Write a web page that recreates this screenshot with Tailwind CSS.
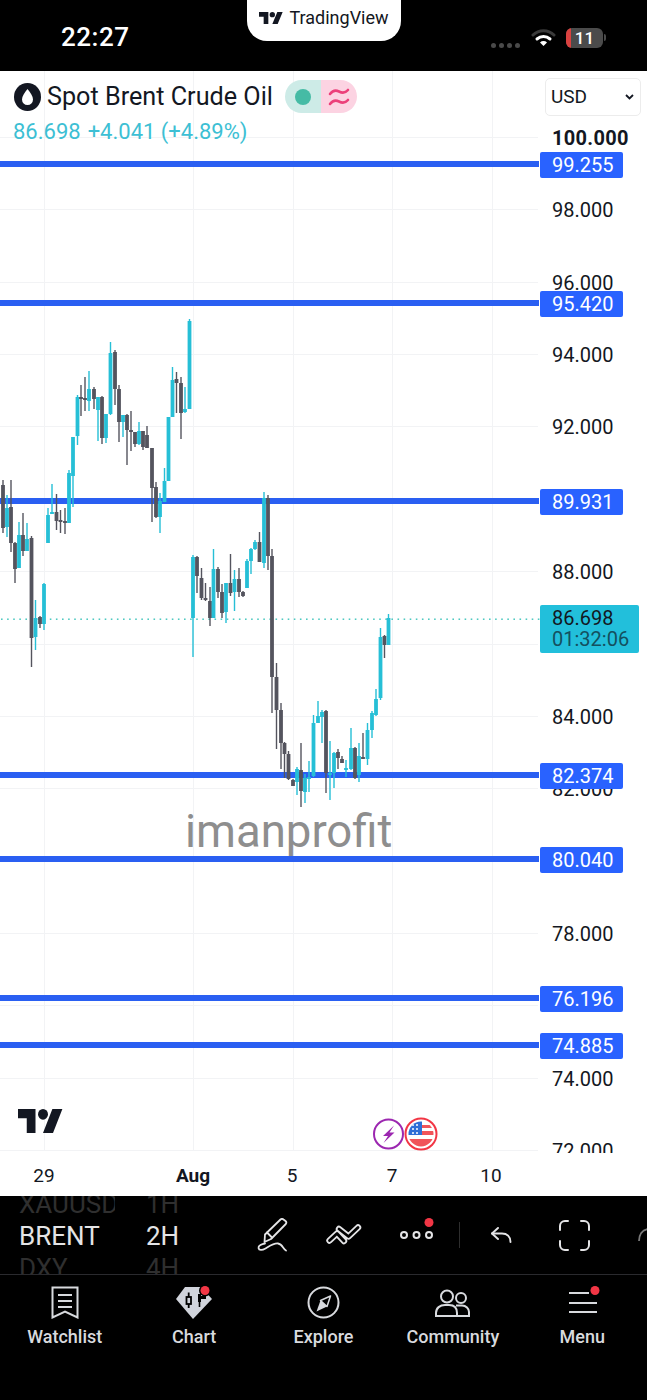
<!DOCTYPE html>
<html lang="en">
<head>
    <meta charset="UTF-8">
    <title>Spot Brent Crude Oil</title>
    <script src="https://cdn.jsdelivr.net/npm/@tailwindcss/browser@4"></script>
</head>
<body class="bg-black">
<div class="w-[647px] h-[1400px] flex flex-col overflow-hidden font-['Roboto',sans-serif] bg-black">

    <!-- status bar -->
    <div class="relative h-[71px] shrink-0 flex items-start bg-black text-white">
        <div class="ml-[61px] mt-[21px] text-[26px] leading-[32px] font-medium tracking-[0.5px]">22:27</div>
        <div class="absolute left-[247px] top-0 w-[154px] h-[41px] bg-white rounded-b-[20px] flex items-center justify-center gap-[6px] pb-[6px]">
            <svg class="w-[24px] h-[12px]" viewBox="0 4 36 18" preserveAspectRatio="none" fill="#131722"><path d="M14 22H7V11H0V4h14v18zM28 22h-8l7.5-18h8L28 22z"/><circle cx="20" cy="8" r="4"/></svg>
            <span class="text-[18px] leading-[20px] text-[#131722]">TradingView</span>
        </div>
        <div class="ml-auto mt-[27px] mr-[41px] flex items-center">
            <div class="flex gap-[3px] mt-[16px]">
                <span class="w-[5px] h-[5px] rounded-full bg-[#4a4a4a]"></span>
                <span class="w-[5px] h-[5px] rounded-full bg-[#4a4a4a]"></span>
                <span class="w-[5px] h-[5px] rounded-full bg-[#4a4a4a]"></span>
                <span class="w-[5px] h-[5px] rounded-full bg-[#4a4a4a]"></span>
            </div>
            <svg class="ml-[11px] w-[25px] h-[19px]" viewBox="0 0 25 19" fill="none" stroke-linecap="round">
                <path d="M2 7a15 15 0 0 1 21 0" stroke="#3a3a3a" stroke-width="3"/>
                <path d="M6 11a10 10 0 0 1 13 0" stroke="#fff" stroke-width="3"/>
                <path d="M12.5 18l-3.5-3.6a5 5 0 0 1 7 0z" fill="#fff"/>
            </svg>
            <div class="ml-[10px] relative w-[37px] h-[20px] rounded-[6px] bg-[#4b4b4b] overflow-hidden flex items-center justify-center text-[17px] leading-[20px] font-medium">
                <span class="absolute left-0 top-0 w-[5px] h-[20px] bg-[#d9413f]"></span>
                <span class="relative">11</span>
            </div>
            <span class="ml-[1px] w-[2px] h-[7px] rounded-r-sm bg-[#4b4b4b]"></span>
        </div>
    </div>

    <!-- chart -->
    <div class="h-[1125px] shrink-0 flex flex-col bg-white">
        <div class="relative h-[1082px] overflow-hidden">
            <svg id="chart" class="absolute left-0 top-0" width="647" height="1082" viewBox="0 71 647 1082"></svg>

            <!-- legend -->
            <div class="absolute left-[14px] top-[9px] flex items-center">
                <svg class="w-[27px] h-[28px]" viewBox="0 0 27 28">
                    <ellipse cx="13.5" cy="14" rx="13.5" ry="14" fill="#131722"/>
                    <path d="M13.5 6c3 4 5.5 7 5.5 10.5a5.5 5.5 0 0 1-11 0C8 13 10.5 10 13.5 6z" fill="#fff"/>
                </svg>
                <div class="ml-[6px] text-[25.2px] leading-[32px] text-[#131722]">Spot Brent Crude Oil</div>
                <div class="ml-[12px] flex h-[33px] w-[72px] rounded-full overflow-hidden">
                    <div class="w-[36px] bg-[#cdebe7] flex items-center justify-center"><span class="w-[16px] h-[16px] rounded-full bg-[#45bba5]"></span></div>
                    <div class="w-[36px] bg-[#fcd3e2] flex items-center justify-center">
                        <svg class="w-[22px] h-[22px]" viewBox="0 0 22 22" fill="none" stroke="#ec407a" stroke-width="2.6" stroke-linecap="round">
                            <path d="M2 8c3-4 6-4 9-2.5s6 2 9-1.5"/>
                            <path d="M2 18c3-4 6-4 9-2.5s6 2 9-1.5"/>
                        </svg>
                    </div>
                </div>
            </div>
            <div class="absolute left-[13px] top-[49px] flex gap-[7px] text-[22px] leading-[24px] text-[#3dbfd4]">
                <span>86.698</span><span>+4.041 (+4.89%)</span>
            </div>
            <div class="absolute left-[545px] top-[7px] w-[96px] h-[38px] bg-white border border-[#ececec] rounded-[5px] flex items-center justify-between pl-[5px] pr-[6px] text-[19px] text-[#131722]">
                <span>USD</span>
                <svg class="w-[9px] h-[6px]" viewBox="0 0 9 6" fill="none" stroke="#131722" stroke-width="1.8"><path d="M1 1l3.5 3.5L8 1"/></svg>
            </div>

            <!-- price scale -->
            <div class="absolute left-[552px] top-[57px] text-[20px] leading-[20px] font-bold text-[#131722] tracking-[0.3px]">100.000</div>
            <div class="absolute left-[552px] top-[129px] text-[20px] leading-[20px] text-[#131722]">98.000</div>
            <div class="absolute left-[552px] top-[202px] text-[20px] leading-[20px] text-[#131722]">96.000</div>
            <div class="absolute left-[552px] top-[274px] text-[20px] leading-[20px] text-[#131722]">94.000</div>
            <div class="absolute left-[552px] top-[346px] text-[20px] leading-[20px] text-[#131722]">92.000</div>
            <div class="absolute left-[552px] top-[491px] text-[20px] leading-[20px] text-[#131722]">88.000</div>
            <div class="absolute left-[552px] top-[636px] text-[20px] leading-[20px] text-[#131722]">84.000</div>
            <div class="absolute left-[552px] top-[708px] text-[20px] leading-[20px] text-[#131722]">82.000</div>
            <div class="absolute left-[552px] top-[853px] text-[20px] leading-[20px] text-[#131722]">78.000</div>
            <div class="absolute left-[552px] top-[998px] text-[20px] leading-[20px] text-[#131722]">74.000</div>
            <div class="absolute left-[552px] top-[1070px] text-[20px] leading-[20px] text-[#131722]">72.000</div>

            <!-- level tags -->
            <div class="absolute left-[540px] top-[81px] w-[83px] h-[26px] rounded-[2px] bg-[#2962ff] text-white text-[20px] leading-[26px] pl-[12px]">99.255</div>
            <div class="absolute left-[540px] top-[220px] w-[83px] h-[26px] rounded-[2px] bg-[#2962ff] text-white text-[20px] leading-[26px] pl-[12px]">95.420</div>
            <div class="absolute left-[540px] top-[418px] w-[83px] h-[26px] rounded-[2px] bg-[#2962ff] text-white text-[20px] leading-[26px] pl-[12px]">89.931</div>
            <div class="absolute left-[540px] top-[692px] w-[83px] h-[26px] rounded-[2px] bg-[#2962ff] text-white text-[20px] leading-[26px] pl-[12px]">82.374</div>
            <div class="absolute left-[540px] top-[776px] w-[83px] h-[26px] rounded-[2px] bg-[#2962ff] text-white text-[20px] leading-[26px] pl-[12px]">80.040</div>
            <div class="absolute left-[540px] top-[915px] w-[83px] h-[26px] rounded-[2px] bg-[#2962ff] text-white text-[20px] leading-[26px] pl-[12px]">76.196</div>
            <div class="absolute left-[540px] top-[962px] w-[83px] h-[26px] rounded-[2px] bg-[#2962ff] text-white text-[20px] leading-[26px] pl-[12px]">74.885</div>

            <!-- last price -->
            <div class="absolute left-[540px] top-[534px] w-[99px] h-[48px] rounded-[2px] bg-[#22bfdb] text-[#131722] text-[20px] leading-[21px] pl-[12px] pt-[3px]">
                <div>86.698</div>
                <div class="text-[#14505f]">01:32:06</div>
            </div>

            <!-- watermark -->
            <div class="absolute left-[185px] top-[733px] text-[45.5px] leading-[56px] text-[#8e8e8e]">imanprofit</div>

            <!-- logo and events -->
            <svg class="absolute left-[18px] top-[1038px] w-[45px] h-[24px]" viewBox="0 4 36 18" preserveAspectRatio="none" fill="#131722"><path d="M14 22H7V11H0V4h14v18zM28 22h-8l7.5-18h8L28 22z"/><circle cx="20" cy="8" r="4"/></svg>
            <svg class="absolute left-[372px] top-[1045px] w-[66px] h-[36px]" viewBox="0 0 66 36">
                <circle cx="16.5" cy="18" r="14.5" fill="#fff" stroke="#9c27b0" stroke-width="2"/>
                <path d="M22 9.5L11 20h5l-4.500 7 11-10.500h-5z" fill="#9c27b0"/>
                <circle cx="49" cy="18" r="15.5" fill="#fff" stroke="#f23645" stroke-width="2"/>
                <clipPath id="flagClip"><circle cx="49" cy="18" r="12.5"/></clipPath>
                <g clip-path="url(#flagClip)">
                    <rect x="36" y="5" width="26" height="26" fill="#fff"/>
                    <rect x="49" y="9" width="13" height="3" fill="#f0545a"/>
                    <rect x="49" y="15" width="13" height="4" fill="#f0545a"/>
                    <rect x="36" y="23" width="26" height="8" fill="#f0545a"/>
                    <rect x="36" y="5" width="14" height="14" fill="#2f6fd6"/>
                    <g fill="#fff"><circle cx="41" cy="9" r="1"/><circle cx="45" cy="9" r="1"/><circle cx="41" cy="13" r="1"/><circle cx="45" cy="13" r="1"/><circle cx="41" cy="17" r="1"/><circle cx="45" cy="17" r="1"/></g>
                </g>
            </svg>
        </div>

        <!-- time scale -->
        <div class="relative h-[43px] text-[19px] leading-[24px] text-[#131722]">
            <span class="absolute left-[44px] top-[11px] -translate-x-1/2">29</span>
            <span class="absolute left-[193px] top-[11px] -translate-x-1/2 font-bold">Aug</span>
            <span class="absolute left-[292px] top-[11px] -translate-x-1/2">5</span>
            <span class="absolute left-[392px] top-[11px] -translate-x-1/2">7</span>
            <span class="absolute left-[491px] top-[11px] -translate-x-1/2">10</span>
        </div>
    </div>

    <!-- toolbar -->
    <div class="h-[79px] shrink-0 flex items-center overflow-hidden border-b border-[#2a2a2e] bg-black">
        <div class="w-[257px] h-[79px] shrink-0 flex text-[26px] leading-[32px]">
            <div class="ml-[19px] w-[96px] -mt-[8px] overflow-hidden whitespace-nowrap">
                <div class="text-[#2f2f2f]">XAUUSD</div>
                <div class="text-[#e4e4e6]">BRENT</div>
                <div class="text-[#2f2f2f]">DXY</div>
            </div>
            <div class="ml-[31px] -mt-[8px]">
                <div class="text-[#2f2f2f]">1H</div>
                <div class="text-[#e4e4e6]">2H</div>
                <div class="text-[#2f2f2f]">4H</div>
            </div>
        </div>
        <svg class="w-[31px] h-[34px] shrink-0" viewBox="0 0 31 34" fill="none" stroke="#e4e4e6" stroke-width="1.8" stroke-linejoin="round" stroke-linecap="round">
            <path d="M23.5 1.5c1-.8 2-.8 3 0l2 1.5c1 .8 1 2 .3 3L14 21l-6.500 3L8 16.500z"/>
            <path d="M10 14.500l5 5"/>
            <path d="M8 25.500c-3 .5-7 2-6.500 4.500s3.500 2.500 7 .5 8-5.500 12.500-5 5 5.500 8 7"/>
        </svg>
        <svg class="ml-[38px] w-[36px] h-[22px] shrink-0" viewBox="0 0 36 22" fill="none" stroke-linejoin="round" stroke-linecap="round">
            <path d="M3.500 16.500L11 9.500l7 7.500M13 5l9.500 7.500L32 3.500" stroke="#e4e4e6" stroke-width="6.4"/>
            <path d="M3.500 16.500L11 9.500l7 7.500" stroke="#000" stroke-width="2.8"/>
            <path d="M13 5l9.500 7.500L32 3.500" stroke="#000" stroke-width="2.8"/>
        </svg>
        <svg class="ml-[38px] w-[34px] h-[36px] shrink-0" viewBox="0 0 34 36" fill="none" stroke="#e4e4e6" stroke-width="2">
            <circle cx="4" cy="18" r="3"/><circle cx="16.5" cy="18" r="3"/><circle cx="29" cy="18" r="3"/>
            <circle cx="29" cy="5.5" r="4.5" fill="#f23645" stroke="none"/>
        </svg>
        <div class="ml-[25px] w-[1px] h-[26px] shrink-0 bg-[#2e2e2e]"></div>
        <svg class="ml-[31px] w-[21px] h-[16px] shrink-0" viewBox="0 0 21 16" fill="none" stroke="#e4e4e6" stroke-width="1.9" stroke-linecap="round" stroke-linejoin="round">
            <path d="M7 1L1 6.500 7 12"/><path d="M1 6.500h10c5 0 8.500 3 8.500 8.500"/>
        </svg>
        <svg class="ml-[47px] w-[31px] h-[31px] shrink-0" viewBox="0 0 31 31" fill="none" stroke="#e4e4e6" stroke-width="2" stroke-linecap="round">
            <path d="M1 10V6a5 5 0 0 1 5-5h3M22 1h3a5 5 0 0 1 5 5v4M30 21v4a5 5 0 0 1-5 5h-3M9 30H6a5 5 0 0 1-5-5v-4"/>
        </svg>
        <svg class="ml-[48px] w-[12px] h-[14px] shrink-0" viewBox="0 0 12 14" fill="none" stroke="#7a7a7a" stroke-width="1.8"><path d="M1 13C1 7 4 2 10 1"/></svg>
    </div>

    <!-- bottom nav -->
    <div class="grid grid-cols-5 flex-1 text-[#d8dade] text-[18px] leading-[20px] font-medium">
        <div class="flex flex-col items-center pt-[11px]">
            <svg class="w-[28px] h-[33px]" viewBox="0 0 28 33" fill="none" stroke="#d8dade" stroke-width="2">
                <path d="M1.5 1.5h25v30l-12.500-6-12.500 6z"/><path d="M7 9h14M7 15h14M7 21h14"/>
            </svg>
            <span class="mt-[8px]">Watchlist</span>
        </div>
        <div class="flex flex-col items-center pt-[11px]">
            <svg class="w-[38px] h-[33px] overflow-visible" viewBox="0 0 38 33">
                <path d="M10 1h16l11 12-19 20L1 13z" fill="#d1d4dc"/>
                <g fill="none" stroke="#000" stroke-width="1.8">
                    <rect x="11.5" y="11" width="4.5" height="7"/><path d="M13.7 6.500V11M13.7 18v4"/>
                </g>
                <path d="M23 8h3v2h5v3h-5v3h-.7v5h-1.600v-5H23z" fill="#000"/>
                <circle cx="30" cy="4.5" r="6" fill="#000"/><circle cx="30" cy="4.5" r="4.5" fill="#f23645"/>
            </svg>
            <span class="mt-[8px]">Chart</span>
        </div>
        <div class="flex flex-col items-center pt-[11px]">
            <svg class="w-[33px] h-[33px]" viewBox="0 0 33 33" fill="none">
                <circle cx="16.5" cy="16.5" r="15" stroke="#d8dade" stroke-width="2"/>
                <path d="M23.5 10l-10 4.500-4 11 10.500-5z" fill="#d8dade"/>
                <path d="M23.5 10l-10 4.500 6.500 6z" fill="#000" stroke="#d8dade" stroke-width="1.5" stroke-linejoin="round"/>
            </svg>
            <span class="mt-[8px]">Explore</span>
        </div>
        <div class="flex flex-col items-center pt-[14px]">
            <svg class="w-[35px] h-[28px]" viewBox="0 0 35 28" fill="none" stroke="#d8dade" stroke-width="2">
                <circle cx="12" cy="7.5" r="6"/><circle cx="26" cy="9" r="5"/>
                <path d="M1 27v-3c0-5 4-8 9-8h4c5 0 8 3 8 8v3z"/>
                <path d="M21 16.500h6c4 0 7 3 7 6.500v4H22"/>
            </svg>
            <span class="mt-[10px]">Community</span>
        </div>
        <div class="flex flex-col items-center pt-[11px]">
            <svg class="w-[32px] h-[33px] ml-[3px]" viewBox="0 0 32 33" fill="none" stroke="#d8dade" stroke-width="2">
                <path d="M1 7h20M1 17h28M1 26h28"/>
                <circle cx="27" cy="4.5" r="4.5" fill="#f23645" stroke="none"/>
            </svg>
            <span class="mt-[8px]">Menu</span>
        </div>
    </div>
</div>

<script>
document.addEventListener('DOMContentLoaded', function() {
    const svg = document.getElementById('chart');
    const TEAL = '#26bfd6';
    const GRAY = '#54545e';

    function rect(x, y, w, h, fill) {
        const r = document.createElementNS('http://www.w3.org/2000/svg', 'rect');
        r.setAttribute('x', x);
        r.setAttribute('y', y);
        r.setAttribute('width', w);
        r.setAttribute('height', h);
        r.setAttribute('fill', fill);
        svg.appendChild(r);
    }

    // grid
    [137, 209, 282, 354, 426, 499, 571, 644, 716, 788, 860, 933, 1005, 1078, 1150].forEach(y => rect(0, y, 538, 1, '#f2f3f5'));
    [44, 193, 293, 392, 492].forEach(x => rect(x, 71, 1, 1080, '#f2f3f5'));

    // horizontal levels
    [164, 303, 501, 775, 859, 998, 1045].forEach(y => rect(0, y - 3, 539, 6, '#2a5ff2'));

    // last price line
    for (let x = 1; x < 538; x += 6.1) rect(x, 618.5, 1.6, 1.4, '#3cc4bb');

    // x, wick top, wick bottom, body top, body bottom, up
    const candles = [
        [3,480,533,485,528,0],[7,495,537,508,527,1],[11,480,552,507,543,0],[15,542,583,543,569,0],
        [19,522,568,535,568,1],[23,513,556,535,551,0],[27,523,550,539,551,1],[31.5,536,667,538,638,0],
        [35.5,600,650,618,637,1],[40,616,628,617,624,0],[44,583,630,584,624,1],[48,508,543,515,543,1],
        [52,484,513,512,514,1],[56.5,494,530,512,521,0],[60.5,510,533,520,522,0],[65,508,534,521,523,0],
        [69,470,523,473,523,1],[73,437,507,437,476,1],[77.5,395,445,397,436,1],[81,385,416,397,399,0],
        [85,377,411,398,400,0],[89,371,411,389,401,1],[94,387,409,389,399,0],[98,397,441,397,410,1],
        [102,396,444,397,438,0],[106,414,443,414,438,1],[110.5,342,415,353,414,1],[115,350,405,352,389,0],
        [119,385,442,389,422,0],[123,415,437,415,422,1],[127,414,465,415,430,0],[131,411,451,430,432,0],
        [135,432,447,432,444,0],[139,422,445,431,444,1],[143,431,450,431,447,0],[147,426,448,435,448,0],
        [152,448,522,448,488,0],[156,482,518,487,517,0],[160,493,533,501,517,1],[164.5,468,502,481,502,1],
        [168.5,417,481,417,481,1],[172.5,367,417,380,417,1],[176.5,372,413,379,383,0],[181,377,439,383,413,0],
        [185,387,413,409,412,1],[189.5,319,409,321,409,1],[193,555,657,557,618,1],[197,556,593,557,576,0],
        [201.5,568,600,578,598,0],[205.5,583,601,598,600,0],[210,587,626,601,618,0],[213.5,549,618,569,618,1],
        [218,567,598,569,592,0],[222,584,618,592,613,0],[226,583,623,583,612,1],[230.5,554,596,583,593,0],
        [234.5,570,611,579,592,1],[239,568,597,579,592,0],[243,591,597,592,596,0],[247,559,588,561,588,1],
        [251,548,574,549,561,1],[255,540,550,542,549,1],[259.5,532,562,542,562,0],[264,492,568,498,563,1],
        [268,495,570,498,556,0],[272,549,713,556,677,0],[276.5,663,749,677,710,0],[281,703,769,710,743,0],
        [284.5,742,778,743,754,0],[288.5,751,780,754,779,0],[293,779,786,780,786,0],[297,767,795,769,782,1],
        [301,743,807,770,791,0],[305,774,803,778,792,1],[309,761,792,777,779,1],[313.5,715,777,723,776,1],
        [318,701,723,716,723,1],[322,710,743,712,717,1],[326,710,793,711,773,0],[330,741,800,773,775,1],
        [334,752,788,753,773,1],[338,749,769,752,758,0],[342,756,763,759,763,0],[346,760,777,768,770,1],
        [351,728,770,748,769,1],[355,747,779,748,778,0],[359,743,782,756,775,1],[363,733,758,757,759,0],
        [367.5,723,765,730,759,1],[372,711,738,713,730,1],[376,689,716,699,715,1],[380.5,628,700,637,698,1],
        [384.5,635,658,636,645,0],[388.5,614,645,618,645,1]
    ];

    candles.forEach(([x, wt, wb, bt, bb, up]) => {
        const color = up ? TEAL : GRAY;
        rect(x - 0.7, wt, 1.4, wb - wt, color);
        rect(x - 1.9, bt, 3.8, bb - bt, color);
    });
});
</script>
</body>
</html>
